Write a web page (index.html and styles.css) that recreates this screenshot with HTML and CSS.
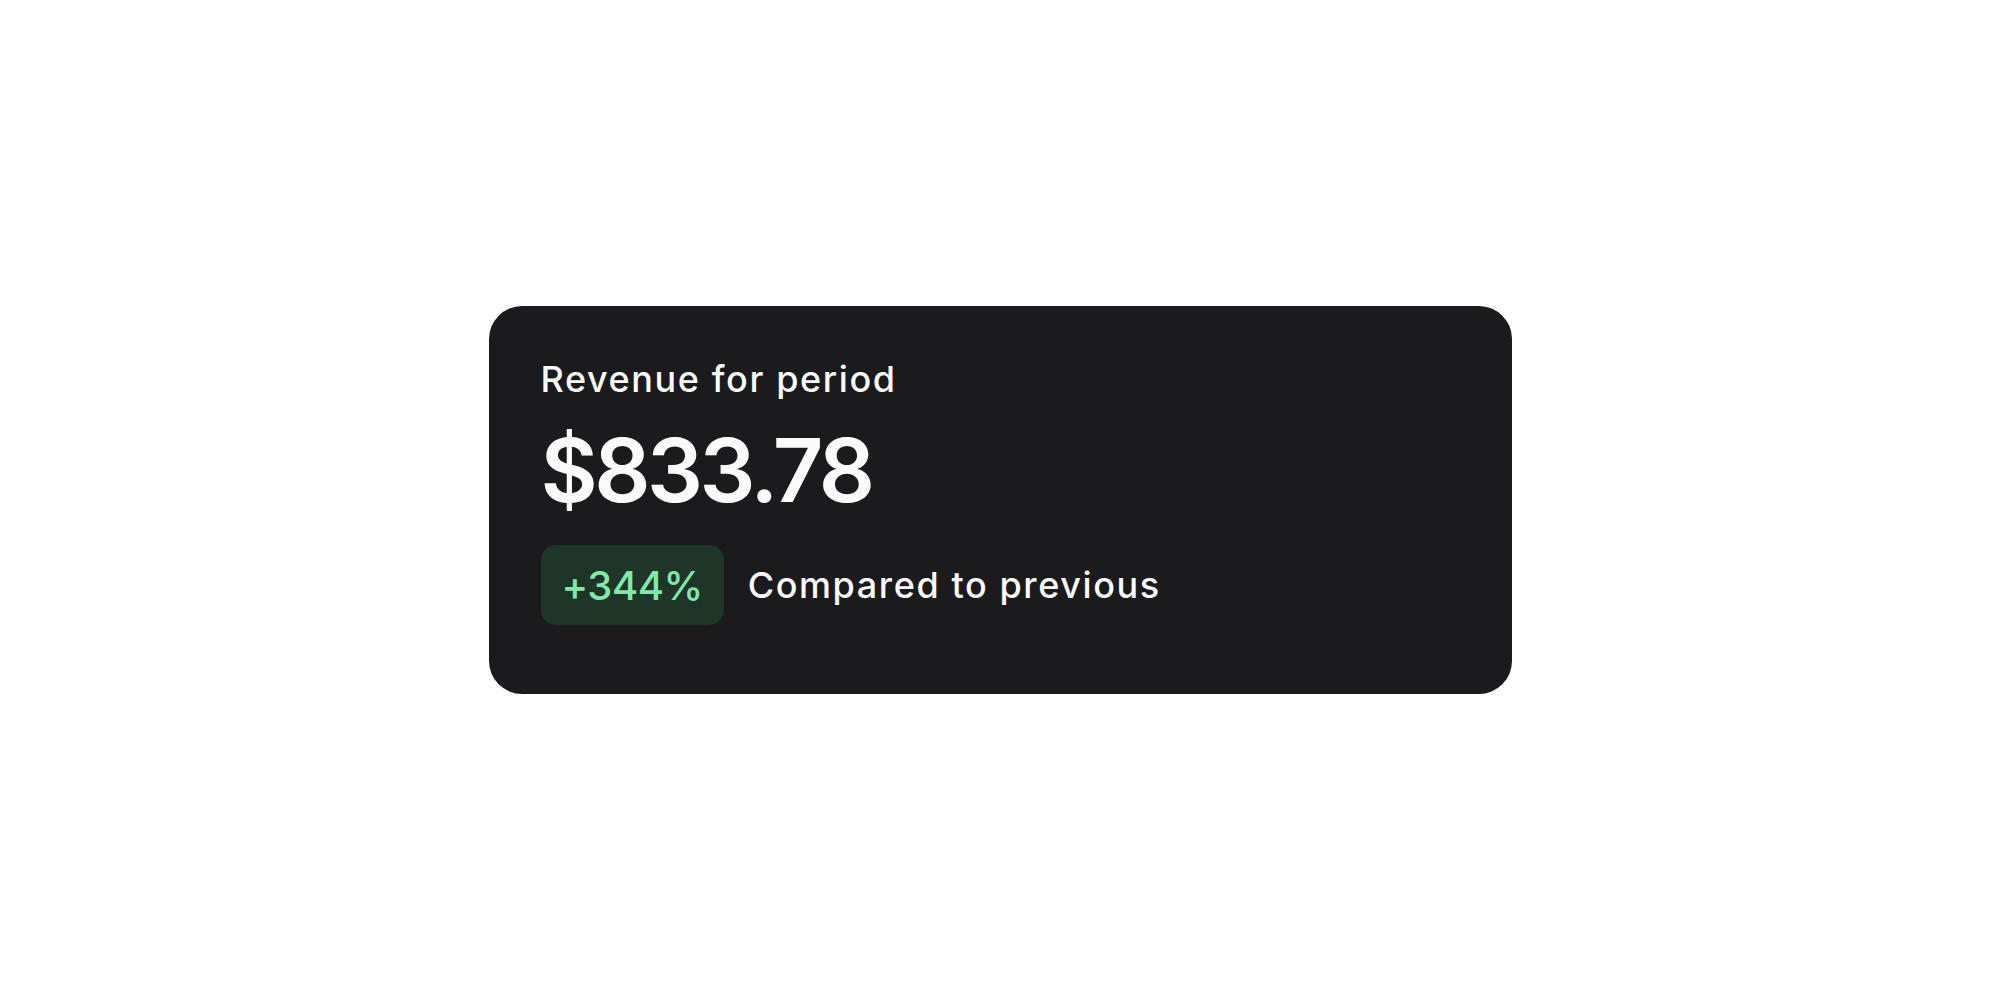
FILE: index.html
```html
<!DOCTYPE html>
<html lang="en">
<head>
    <meta charset="UTF-8">
    <meta name="viewport" content="width=device-width, initial-scale=1.0">
    <title>Revenue</title>
    <link rel="stylesheet" href="styles.css">
</head>
<body>
    <div class="card">
        <div class="label">Revenue for period</div>
        <div class="amount">$833.78</div>
        <div class="compare">
            <span class="badge">+344%</span>
            <span class="compare-text">Compared to previous</span>
        </div>
    </div>
</body>
</html>
```

FILE: styles.css
```css
body {
    font-family: Inter, 'Noto Sans', sans-serif;
    background-color: #ffffff;
    display: flex;
    justify-content: center;
    align-items: center;
    height: 100vh;
    margin: 0;
}

.card {
    box-sizing: border-box;
    width: 1023px;
    height: 388px;
    padding: 52px 52px 0;
    background-color: #1b1b1d;
    border-radius: 33px;
    color: #fafafa;
}

.label {
    font-size: 36px;
    line-height: 42px;
    font-weight: 500;
    letter-spacing: 1.6px;
}

.amount {
    font-size: 88px;
    line-height: 106px;
    font-weight: 560;
    margin-top: 17px;
    letter-spacing: -3.5px;
}

.compare {
    display: flex;
    align-items: center;
    gap: 24px;
    margin-top: 22px;
}

.badge {
    display: flex;
    align-items: center;
    box-sizing: border-box;
    height: 80px;
    padding: 0 21px;
    background-color: #1f3528;
    color: #82e8aa;
    border-radius: 15px;
    font-size: 40px;
    font-weight: 500;
    letter-spacing: -0.5px;
}

.compare-text {
    font-size: 36px;
    line-height: 42px;
    font-weight: 500;
    letter-spacing: 1.6px;
}
```
